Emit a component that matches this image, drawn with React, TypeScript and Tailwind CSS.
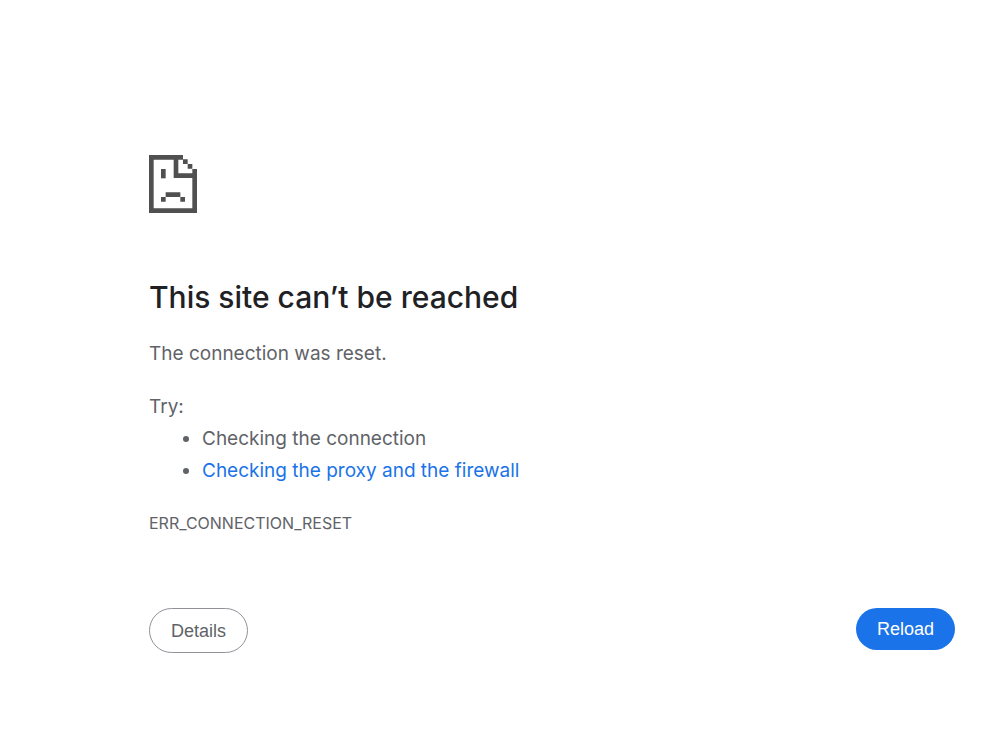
function SadPageIcon() {
  return (
    <svg
      viewBox="0 0 144 174"
      className="h-[58px] w-12"
      fill="#505050"
      aria-hidden="true"
    >
      <path d="M0 0H102V14H88V55H130V42H144V174H0ZM14 14V160H130V69H74V14Z" fillRule="evenodd" />
      <path d="M102 13h14v14h-14zM116 27h14v14h-14z" />
      <path d="M36 42h14v28h-14z" />
      <path d="M50 112h44v14h-44zM36 126h14v14h-14zM94 126h14v14h-14z" />
    </svg>
  );
}

export default function App() {
  return (
    <main className="min-h-screen bg-white pt-[155px] pr-[45px] pb-20 pl-[149px] font-['Inter','Liberation_Sans',sans-serif] text-[19px] leading-8 text-[#5f6368]">
      <SadPageIcon />
      <h1 className="mt-16 text-3xl leading-10 font-medium text-[#202124]">
        This site can’t be reached
      </h1>
      <p className="mt-[21px]">The connection was reset.</p>
      <div className="mt-[21px]">
        <p>Try:</p>
        <ul className="list-disc pl-[53px]">
          <li>Checking the connection</li>
          <li>
            <a href="#proxy" className="text-[#1a73e8]">
              Checking the proxy and the firewall
            </a>
          </li>
        </ul>
      </div>
      <p className="mt-6 text-base leading-6">ERR_CONNECTION_RESET</p>
      <div className="mt-[73px] flex items-start justify-between font-['Liberation_Sans',Arial,sans-serif] text-lg leading-6">
        <button
          type="button"
          className="h-[45px] cursor-pointer rounded-full border border-[#8f9398] px-[21px] text-[#5f6368]"
        >
          Details
        </button>
        <button
          type="button"
          className="h-[42px] cursor-pointer rounded-full bg-[#1a73e8] px-[21px] text-white"
        >
          Reload
        </button>
      </div>
    </main>
  );
}
